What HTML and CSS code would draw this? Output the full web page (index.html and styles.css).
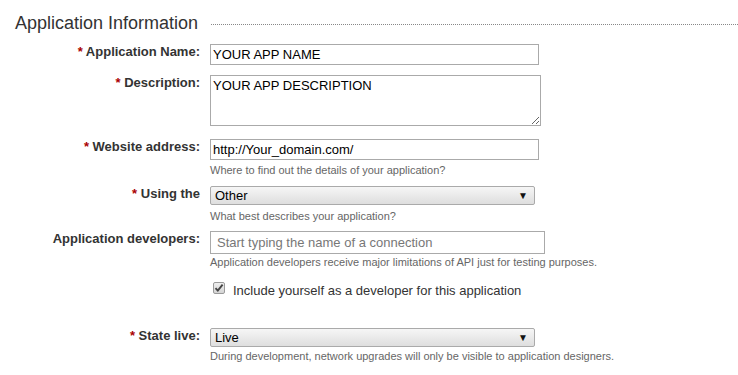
FILE: index.html
```html
<!DOCTYPE html>
<html>
<head>
<meta charset="utf-8">
<link rel="stylesheet" href="styles.css">
</head>
<body>
<div class="page">
  <div class="section-head">
    <h2 class="section-title">Application Information</h2>
    <div class="section-rule"></div>
  </div>

  <div class="row row-name">
    <label class="label"><span class="req">*</span> Application Name:</label>
    <div class="field"><input class="text-input w-name" type="text" value="YOUR APP NAME"></div>
  </div>

  <div class="row row-desc">
    <label class="label"><span class="req">*</span> Description:</label>
    <div class="field"><textarea class="text-area">YOUR APP DESCRIPTION</textarea></div>
  </div>

  <div class="row row-site">
    <label class="label"><span class="req">*</span> Website address:</label>
    <div class="field">
      <input class="text-input w-name" type="text" value="http://Your_domain.com/">
      <div class="hint">Where to find out the details of your application?</div>
    </div>
  </div>

  <div class="row row-using">
    <label class="label"><span class="req">*</span> Using the</label>
    <div class="field">
      <div class="select"><span class="select-value">Other</span><span class="select-arrow">▼</span></div>
      <div class="hint hint-loose">What best describes your application?</div>
    </div>
  </div>

  <div class="row row-devs">
    <label class="label">Application developers:</label>
    <div class="field">
      <input class="text-input w-devs" type="text" placeholder="Start typing the name of a connection">
      <div class="hint hint-tight">Application developers receive major limitations of API just for testing purposes.</div>
    </div>
  </div>

  <div class="row row-check">
    <div class="label"></div>
    <div class="field check-line">
      <span class="check-box"><svg width="10" height="10" viewBox="0 0 10 10"><path d="M1.5 5.2 L3.8 7.6 L8.6 1.6" fill="none" stroke="#444" stroke-width="1.9"/></svg></span>
      <span class="check-label">Include yourself as a developer for this application</span>
    </div>
  </div>

  <div class="row row-state">
    <label class="label"><span class="req">*</span> State live:</label>
    <div class="field">
      <div class="select"><span class="select-value">Live</span><span class="select-arrow">▼</span></div>
      <div class="hint hint-mid">During development, network upgrades will only be visible to application designers.</div>
    </div>
  </div>
</div>
</body>
</html>
```
FILE: styles.css
```css
html, body {
  margin: 0;
  padding: 0;
  background: #fff;
}

body {
  font-family: "Liberation Sans", Arial, sans-serif;
  color: #333;
  width: 738px;
  height: 375px;
  overflow: hidden;
}

.page {
  padding: 13px 0 0 15px;
}

.section-head {
  display: flex;
  align-items: flex-start;
}

.section-title {
  margin: 0;
  font-size: 18px;
  line-height: 21px;
  font-weight: normal;
  color: #333;
}

.section-rule {
  flex: 1;
  margin: 11px 0 0 13px;
  border-top: 1px dotted #888;
}

.row {
  display: grid;
  grid-template-columns: 185px auto;
  column-gap: 10px;
  align-items: start;
}

.row-name { margin-top: 10px; }
.row-desc { margin-top: 10px; }
.row-site { margin-top: 13px; }
.row-using { margin-top: 9px; }
.row-devs { margin-top: 8px; }
.row-check { margin-top: 10px; }
.row-state { margin-top: 28px; }

.label {
  text-align: right;
  font-size: 13px;
  line-height: 16px;
  font-weight: bold;
  color: #333;
  white-space: nowrap;
}

.req {
  color: #a00;
}

.field {
  display: flex;
  flex-direction: column;
  align-items: flex-start;
}

.text-input {
  box-sizing: border-box;
  height: 21px;
  margin: 0;
  padding: 0 2px;
  border: 1px solid #aaa;
  border-radius: 0;
  font-family: "Liberation Sans", Arial, sans-serif;
  font-size: 13px;
  color: #000;
  background: #fff;
  outline: none;
}

.w-name { width: 329px; }

.w-devs {
  width: 335px;
  height: 23px;
  padding: 0 6px;
}

.text-input::placeholder {
  color: #777;
}

.text-area {
  box-sizing: border-box;
  width: 331px;
  height: 51px;
  margin: 0;
  padding: 2px 2px;
  border: 1px solid #aaa;
  border-radius: 0;
  font-family: "Liberation Sans", Arial, sans-serif;
  font-size: 13px;
  line-height: 15px;
  color: #000;
  resize: both;
  outline: none;
}

.select {
  box-sizing: border-box;
  width: 325px;
  height: 19px;
  border: 1px solid #aaa;
  border-radius: 2px;
  background: linear-gradient(#f6f6f6, #dedede);
  display: flex;
  align-items: center;
  justify-content: space-between;
  padding: 0 6px 0 4px;
  font-size: 13px;
  color: #000;
}

.select-value {
  line-height: 17px;
}

.select-arrow {
  font-size: 10px;
  color: #111;
  line-height: 17px;
}

.hint {
  margin-top: 3px;
  font-size: 11px;
  line-height: 14px;
  color: #666;
  white-space: nowrap;
}

.hint-loose {
  margin-top: 4px;
}

.hint-tight {
  margin-top: 1px;
}

.hint-mid {
  margin-top: 2px;
}

.check-line {
  flex-direction: row;
  align-items: flex-start;
  padding-left: 3px;
}

.check-box {
  box-sizing: border-box;
  width: 12px;
  height: 12px;
  margin-top: 3px;
  border: 1px solid #9a9a9a;
  border-radius: 2px;
  background: linear-gradient(#eee, #d4d4d4);
  display: flex;
  align-items: center;
  justify-content: center;
}

.check-label {
  margin-left: 8px;
  padding-top: 3px;
  font-size: 13px;
  line-height: 18px;
  color: #333;
}
```
